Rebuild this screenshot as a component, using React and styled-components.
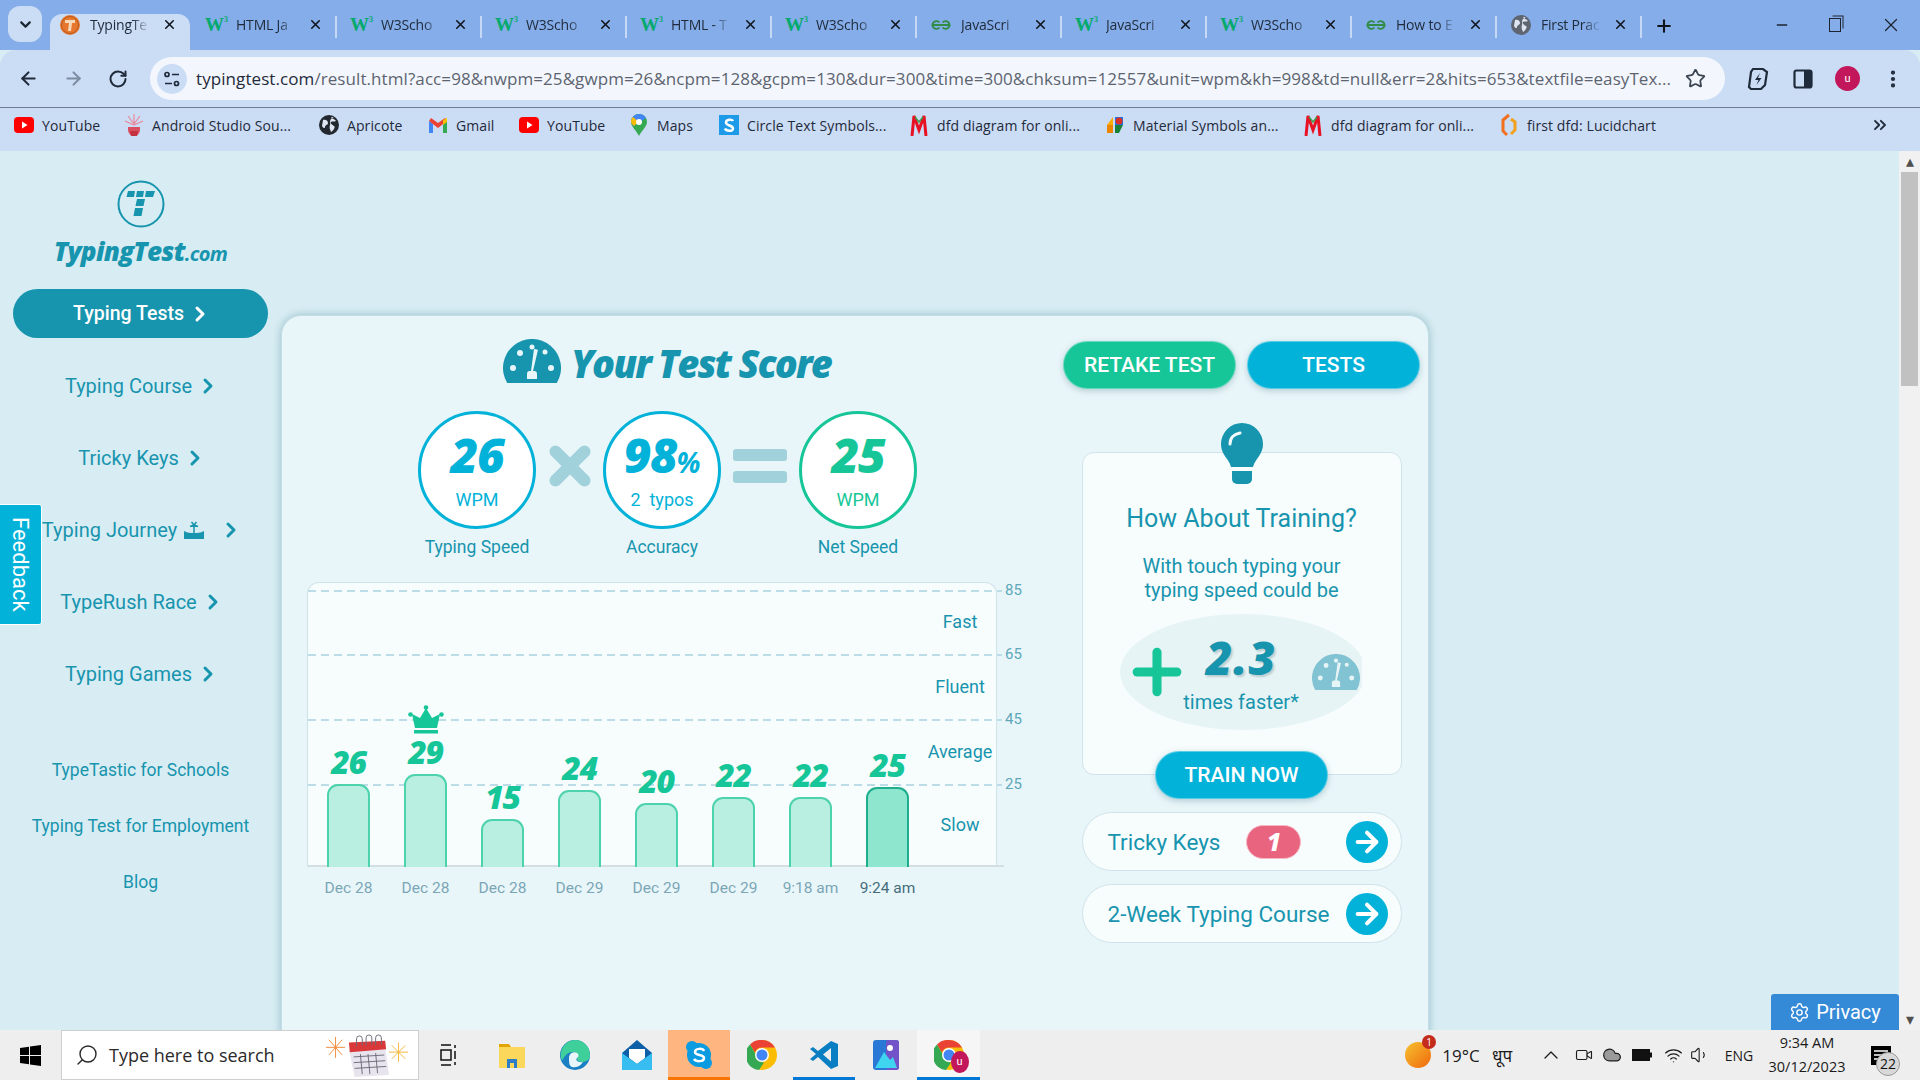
import React from "react"
import styled, { createGlobalStyle } from "styled-components"
import {
  ArrowLeft,
  ArrowRight,
  RotateCw,
  Star,
  X,
  Plus,
  Minus,
  ChevronDown,
  ChevronRight,
  ChevronUp,
  ChevronsRight,
  Settings,
  EllipsisVertical,
  Search,
  Cloud,
  Wifi,
  Volume1,
  Video
} from "lucide-react"

const TEAL = "#1794ae"
const CYAN = "#03b2d9"
const GREEN = "#17c698"

const GlobalStyle = createGlobalStyle`
  html, body { margin: 0; padding: 0; height: 100%; overflow: hidden; }
  body { font-family: Roboto, "Liberation Sans", sans-serif; }
  * { box-sizing: border-box; }
`

const Screen = styled.div`
  width: 1920px;
  height: 1080px;
  display: flex;
  flex-direction: column;
  overflow: hidden;
  background: #d8edf3;
`

/* browser chrome */
const TabStrip = styled.div`
  height: 50px;
  flex: none;
  background: #85ade9;
  display: flex;
  align-items: flex-end;
  padding-left: 8px;
`
const TabToggle = styled.div`
  width: 34px;
  height: 36px;
  margin: 0 8px 8px 0;
  border-radius: 12px;
  background: #cbdcf5;
  display: flex;
  align-items: center;
  justify-content: center;
  color: #1b2430;
`
const TabCell = styled.div`
  height: 36px;
  flex: none;
  display: flex;
  align-items: center;
  padding: ${p => (p.$active ? "0 0 15px 10px" : "0 0 15px 11px")};
  margin-right: ${p => (p.$active ? "5px" : "0")};
  width: ${p => (p.$active ? "140px" : "145px")};
  border-radius: 12px 12px 0 0;
  background: ${p => (p.$active ? "#cbdcf5" : "transparent")};
  position: relative;
  &::after {
    content: "";
    display: ${p => (p.$active ? "none" : "block")};
    position: absolute;
    right: 3px;
    top: 2px;
    width: 2px;
    height: 22px;
    background: #c5d8f4;
  }
`
const TabIcon = styled.span`
  width: 20px;
  height: 20px;
  flex: none;
  display: flex;
  align-items: center;
  justify-content: center;
`
const TabTitle = styled.span`
  width: 65px;
  margin-left: 10px;
  font: 14px "Open Sans", sans-serif;
  letter-spacing: -0.2px;
  color: #1f2a3a;
  white-space: nowrap;
  -webkit-mask-image: linear-gradient(90deg, #000 65%, transparent 92%);
  mask-image: linear-gradient(90deg, #000 65%, transparent 92%);
`
const TabClose = styled.span`
  margin-left: 7px;
  display: flex;
  color: #10151c;
`
const W3 = styled.span`
  font: 700 19px/20px "Liberation Serif", serif;
  color: #04aa6d;
  letter-spacing: -1px;
  sup {
    font-size: 8px;
    line-height: 0;
    color: #04aa6d;
    vertical-align: 9px;
    margin-left: 1px;
  }
`
const NewTab = styled.div`
  margin: 0 0 12px 9px;
  height: 24px;
  display: flex;
  align-items: center;
  color: #10151c;
`
const WindowButtons = styled.div`
  margin-left: auto;
  height: 50px;
  display: flex;
  align-items: center;
  color: #1b2430;
  padding-right: 18px;
  gap: 39px;
`
const RestoreGlyph = styled.span`
  width: 12px;
  height: 14px;
  border: 1.5px solid #1b2430;
  box-shadow: 2px -2px 0 -0.5px #85ade9, 3px -3px 0 -0.5px #1b2430;
`
const Toolbar = styled.div`
  height: 58px;
  flex: none;
  background: #cbdcf5;
  border-bottom: 1px solid #6f7d92;
  border-radius: 16px 16px 0 0;
  display: flex;
  align-items: center;
  padding: 0 0 0 18px;
  color: #1f2a3a;
`
const NavIcon = styled.span`
  width: 45px;
  display: flex;
  color: ${p => (p.$dim ? "#7d8ca0" : "#1f2a3a")};
`
const Omnibox = styled.div`
  position: relative;
  margin-left: -3px;
  width: 1575px;
  height: 43px;
  border-radius: 22px;
  background: #f3f7fd;
  display: flex;
  align-items: center;
  padding-left: 7px;
`
const SiteInfo = styled.span`
  width: 30px;
  height: 30px;
  flex: none;
  border-radius: 50%;
  background: #cbdcf5;
  display: flex;
  align-items: center;
  justify-content: center;
`
const Url = styled.span`
  margin-left: 9px;
  font: 17px "Open Sans", sans-serif;
  letter-spacing: 0.08px;
  color: #5d6470;
  white-space: nowrap;
  b {
    font-weight: 400;
    color: #1f2a3a;
  }
`
const UrlStar = styled.span`
  position: absolute;
  right: 19px;
  top: 11px;
  display: flex;
  color: #3a4350;
`
const ToolIcons = styled.div`
  flex: 1;
  display: flex;
  align-items: center;
  padding-left: 20px;
  gap: 20px;
`
const ToolSlot = styled.span`
  width: 25px;
  height: 25px;
  display: flex;
  align-items: center;
  justify-content: center;
`
const Avatar = styled.span`
  width: 25px;
  height: 25px;
  border-radius: 50%;
  background: #c2185b;
  color: #fff;
  font-size: 11px;
  display: flex;
  align-items: center;
  justify-content: center;
`
const BookmarkBar = styled.div`
  height: 43px;
  flex: none;
  background: #cbdcf5;
  display: flex;
  align-items: center;
  padding: 0 0 9px 14px;
  position: relative;
`
const Bookmark = styled.div`
  width: ${p => p.$w}px;
  flex: none;
  display: flex;
  align-items: center;
  gap: 8px;
  font: 14px "Open Sans", sans-serif;
  letter-spacing: 0.1px;
  color: #1f2a3a;
  white-space: nowrap;
`
const BookmarkIcon = styled.span`
  width: 20px;
  height: 20px;
  flex: none;
  display: flex;
  align-items: center;
  justify-content: center;
`
const More = styled.span`
  position: absolute;
  right: 30px;
  top: 7px;
  display: flex;
  color: #1f2a3a;
`

/* page */
const Viewport = styled.div`
  flex: 1;
  min-height: 0;
  display: flex;
`
const Page = styled.div`
  flex: 1;
  min-width: 0;
  position: relative;
  overflow: hidden;
  display: flex;
  align-items: flex-start;
`
const Scrollbar = styled.div`
  width: 21px;
  flex: none;
  background: #f1f1f1;
  display: flex;
  flex-direction: column;
  align-items: center;
  color: #505050;
`
const ScrollArrow = styled.span`
  height: 21px;
  flex: none;
  display: flex;
  align-items: center;
  justify-content: center;
`
const ScrollThumb = styled.div`
  width: 17px;
  height: 214px;
  flex: none;
  background: #c1c1c1;
  margin-bottom: auto;
`
const Sidebar = styled.nav`
  width: 281px;
  flex: none;
  display: flex;
  flex-direction: column;
  align-items: center;
  padding-top: 29px;
`
const Brand = styled.div`
  margin-top: 8px;
  height: 30px;
  font: italic 800 26px/30px "Open Sans", sans-serif;
  letter-spacing: -0.7px;
  color: ${TEAL};
  small {
    font-size: 20px;
    font-weight: 700;
  }
`
const SideList = styled.div`
  margin-top: 23px;
  margin-bottom: 60px;
  display: flex;
  flex-direction: column;
  gap: 23px;
  align-items: center;
`
const SideItem = styled.div`
  width: 255px;
  height: 49px;
  border-radius: 25px;
  display: flex;
  align-items: center;
  justify-content: center;
  gap: 4px;
  padding-left: 4px;
  font-size: ${p => (p.$active ? 19.5 : 20)}px;
  font-weight: ${p => (p.$active ? 500 : 400)};
  background: ${p => (p.$active ? TEAL : "transparent")};
  color: ${p => (p.$active ? "#fff" : TEAL)};
`
const SmallLinks = styled.div`
  display: flex;
  flex-direction: column;
  gap: 32px;
  align-items: center;
  font-size: 17.5px;
  line-height: 24px;
  color: ${TEAL};
`
const Feedback = styled.div`
  position: absolute;
  left: -2px;
  top: 353px;
  width: 44px;
  height: 121px;
  background: ${CYAN};
  border: 1px solid #fff;
  border-radius: 0 3px 3px 0;
  color: #fff;
  font-size: 22px;
  writing-mode: vertical-rl;
  display: flex;
  align-items: center;
  justify-content: center;
`
const Privacy = styled.div`
  position: absolute;
  right: 0;
  bottom: 0;
  width: 128px;
  height: 36px;
  background: #358ad8;
  border-radius: 3px 3px 0 0;
  color: #fff;
  font-size: 20px;
  display: flex;
  align-items: center;
  justify-content: center;
  gap: 6px;
`
const Card = styled.main`
  margin-top: 164px;
  width: 1148px;
  height: 760px;
  flex: none;
  background: #e9f6f9;
  border-radius: 20px 20px 0 0;
  border: 1px solid #c2dde6;
  box-shadow: 0 0 8px rgba(70, 130, 150, 0.45);
  padding: 23px 9px 0 25px;
  display: grid;
  grid-template-columns: 716px 357px;
  column-gap: 40px;
  align-content: start;
`
const LeftColumn = styled.section`
  display: flex;
  flex-direction: column;
`
const ScoreHeader = styled.div`
  height: 44px;
  display: flex;
  align-items: center;
  justify-content: center;
  gap: 10px;
  padding-left: 4px;
`
const ScoreTitle = styled.h1`
  margin: 4px 0 0;
  font: italic 800 38px/44px "Open Sans", sans-serif;
  letter-spacing: -1.8px;
  color: ${TEAL};
`
const ScoreRow = styled.div`
  margin-top: 28px;
  display: flex;
  justify-content: center;
  gap: 12px;
  padding-left: 5px;
`
const ScoreCol = styled.div`
  width: 118px;
  display: flex;
  flex-direction: column;
  align-items: center;
`
const Ring = styled.div`
  width: 118px;
  height: 118px;
  border-radius: 50%;
  background: #fff;
  border: 3px solid ${p => p.$color};
  color: ${p => p.$color};
  display: flex;
  flex-direction: column;
  align-items: center;
  justify-content: center;
`
const RingValue = styled.div`
  font: italic 800 48px/50px "Open Sans", sans-serif;
  letter-spacing: -1.4px;
  margin-top: 1px;
  small {
    font-size: 28px;
    line-height: 0;
    font-weight: 700;
    letter-spacing: 0;
  }
`
const RingNote = styled.div`
  font-size: 18px;
  line-height: 22px;
  margin-top: 9px;
  white-space: nowrap;
`
const ScoreLabel = styled.div`
  margin-top: 6px;
  font-size: 17.5px;
  line-height: 24px;
  color: ${TEAL};
  white-space: nowrap;
`
const Operator = styled.div`
  width: ${p => p.$w}px;
  height: 110px;
  flex: none;
  display: flex;
  flex-direction: column;
  align-items: center;
  justify-content: center;
  gap: 10px;
`
const EqualBar = styled.span`
  width: 54px;
  height: 12px;
  border-radius: 3px;
  background: #a1d1db;
`
const Chart = styled.div`
  margin-top: 23px;
  width: 690px;
  height: 285px;
  position: relative;
  background: #f7fdfd;
  border: 1px solid #cfe3ea;
  border-bottom: none;
  border-radius: 12px 12px 0 0;
`
const Baseline = styled.div`
  position: absolute;
  left: -1px;
  bottom: 0;
  width: 697px;
  height: 2px;
  background: #d3dfe2;
`
const GridLine = styled.div`
  position: absolute;
  left: 0;
  width: 694px;
  height: 1.5px;
  top: ${p => p.$top}px;
  background: repeating-linear-gradient(90deg, #bcdde8 0 8px, transparent 8px 13px);
`
const Tick = styled.span`
  position: absolute;
  left: 697px;
  top: ${p => p.$top - 9}px;
  font-size: 15px;
  line-height: 18px;
  color: #5da7ba;
`
const Band = styled.span`
  position: absolute;
  left: 612px;
  width: 80px;
  text-align: center;
  top: ${p => p.$top - 12}px;
  font-size: 18px;
  line-height: 24px;
  color: ${TEAL};
`
const Bars = styled.div`
  position: relative;
  height: 100%;
  display: flex;
  align-items: flex-end;
  gap: 34px;
  padding-left: 19px;
`
const BarCol = styled.div`
  width: 43px;
  flex: none;
  display: flex;
  flex-direction: column;
  align-items: center;
`
const CrownSlot = styled.span`
  display: flex;
  margin-bottom: 3px;
`
const BarValue = styled.div`
  font: italic 800 32px/30px "Open Sans", sans-serif;
  letter-spacing: -1.2px;
  color: ${GREEN};
  margin-bottom: 7px;
`
const Bar = styled.div`
  width: 43px;
  height: ${p => p.$h}px;
  background: ${p => (p.$latest ? "#8fe6cf" : "#b9efe0")};
  border: 2px solid ${p => (p.$latest ? "#1fae8d" : "#4dd2ae")};
  border-bottom: none;
  border-radius: 11px 11px 0 0;
`
const Dates = styled.div`
  margin-top: 11px;
  display: flex;
  gap: 34px;
  padding-left: 20px;
`
const DateCell = styled.div`
  width: 43px;
  flex: none;
  display: flex;
  justify-content: center;
  white-space: nowrap;
  font-size: 15.5px;
  line-height: 20px;
  color: ${p => (p.$latest ? "#466d7b" : "#7ba6b6")};
`
const RightColumn = styled.aside`
  display: flex;
  flex-direction: column;
  align-items: center;
`
const Buttons = styled.div`
  margin-top: 2px;
  display: flex;
  gap: 11px;
`
const PillButton = styled.div`
  width: ${p => p.$w || 173}px;
  height: 48px;
  border-radius: 24px;
  background: ${p => p.$color};
  border: 1px solid rgba(255, 255, 255, 0.35);
  box-shadow: 0 2px 6px rgba(60, 110, 130, 0.3);
  color: #fff;
  font-size: 21px;
  font-weight: 500;
  display: flex;
  align-items: center;
  justify-content: center;
`
const TrainingCard = styled.div`
  position: relative;
  margin-top: 63px;
  width: 320px;
  background: #f7fdfd;
  border: 1px solid #cfe3ea;
  border-radius: 12px;
  display: flex;
  flex-direction: column;
  align-items: center;
  padding-top: 51px;
  margin-bottom: 37px;
`
const BulbSlot = styled.span`
  position: absolute;
  top: -30px;
  left: 138px;
  display: flex;
`
const TrainingTitle = styled.h2`
  margin: 0;
  font-size: 25px;
  line-height: 30px;
  font-weight: 400;
  color: ${TEAL};
`
const TrainingText = styled.p`
  margin: 20px 0 0;
  font-size: 20px;
  line-height: 24px;
  text-align: center;
  color: ${TEAL};
`
const OvalClip = styled.div`
  margin-top: 12px;
  width: 242px;
  height: 116px;
  overflow: hidden;
  margin-left: -2px;
`
const Oval = styled.div`
  width: 246px;
  height: 116px;
  border-radius: 50%;
  background: #e7f4f6;
  display: flex;
  align-items: center;
  padding-left: 17px;
  gap: 7px;
`
const PlusMark = styled.span`
  width: 40px;
  flex: none;
  display: flex;
  align-items: center;
  justify-content: center;
  color: ${GREEN};
  svg {
    flex: none;
  }
`
const OvalMiddle = styled.div`
  width: 115px;
  flex: none;
  display: flex;
  flex-direction: column;
  align-items: center;
  color: ${TEAL};
`
const Times = styled.div`
  font: italic 800 46px/48px "Open Sans", sans-serif;
  letter-spacing: 1px;
  text-shadow: 2px 2px 2px rgba(60, 90, 100, 0.25);
  margin-top: 3px;
`
const Faster = styled.div`
  font-size: 20px;
  line-height: 24px;
  margin-top: 9px;
  white-space: nowrap;
`
const GaugeSlot = styled.span`
  margin-left: 6px;
  display: flex;
  flex: none;
`
const TrainNow = styled(PillButton)`
  margin-top: 21px;
  margin-bottom: -25px;
  position: relative;
`
const LinkPill = styled.div`
  width: 320px;
  height: 59px;
  border-radius: 30px;
  background: #f7fdfd;
  border: 1px solid #cfe3ea;
  display: flex;
  align-items: center;
  padding: 0 13px 0 25px;
  font-size: 22.5px;
  color: ${TEAL};
  white-space: nowrap;
  margin-bottom: 13px;
`
const Badge = styled.span`
  margin-left: 26px;
  width: 55px;
  height: 34px;
  border-radius: 17px;
  background: #e9647f;
  border: 1px solid #f6b9c6;
  color: #fff;
  font: italic 800 24px/32px "Open Sans", sans-serif;
  text-align: center;
`
const GoCircle = styled.span`
  margin-left: auto;
  width: 42px;
  height: 42px;
  border-radius: 50%;
  background: ${CYAN};
  color: #fff;
  display: flex;
  align-items: center;
  justify-content: center;
`

/* taskbar */
const Taskbar = styled.footer`
  height: 50px;
  flex: none;
  background: #eeeeee;
  display: flex;
  align-items: stretch;
  position: relative;
`
const StartSlot = styled.div`
  width: 61px;
  flex: none;
  display: flex;
  align-items: center;
  justify-content: center;
`
const SearchBox = styled.div`
  width: 358px;
  flex: none;
  background: #fff;
  border: 1px solid #cfcfcf;
  display: flex;
  align-items: center;
  padding-left: 13px;
  font: 18px "Open Sans", sans-serif;
  color: #2a2a2a;
  gap: 10px;
`
const SearchArt = styled.span`
  margin-left: auto;
  margin-right: 8px;
  display: flex;
`
const AppCell = styled.div`
  width: 62.3px;
  flex: none;
  display: flex;
  align-items: center;
  justify-content: center;
  background: ${p => p.$bg || "transparent"};
  border-bottom: 3px solid ${p => p.$line || "transparent"};
  padding-top: 3px;
`
const Tray = styled.div`
  margin-left: auto;
  display: flex;
  align-items: center;
  color: #1b1b1b;
`
const TraySlot = styled.span`
  width: ${p => p.$w}px;
  flex: none;
  display: flex;
  align-items: center;
  justify-content: center;
  font: ${p => p.$size || 17}px "Open Sans", "Noto Sans", sans-serif;
  white-space: nowrap;
  position: relative;
`
const Clock = styled.div`
  width: 90px;
  flex: none;
  text-align: center;
  font: 14.5px/24px "Open Sans", sans-serif;
  color: #1b1b1b;
`
const WeatherDot = styled.span`
  width: 26px;
  height: 26px;
  border-radius: 50%;
  background: linear-gradient(135deg, #f6c22e, #f0680e);
  position: relative;
`
const WeatherBadge = styled.span`
  position: absolute;
  top: -7px;
  right: -5px;
  width: 14px;
  height: 14px;
  border-radius: 50%;
  background: #c42b1c;
  color: #fff;
  font-size: 10px;
  line-height: 14px;
  text-align: center;
`
const NoteBadge = styled.span`
  position: absolute;
  left: 24px;
  top: 6px;
  width: 24px;
  height: 24px;
  border-radius: 50%;
  background: #d8d8d8;
  border: 1px solid #999;
  font: 14px/22px "Open Sans", sans-serif;
  text-align: center;
  color: #111;
`
const ProfileWrap = styled.span`
  position: relative;
  display: flex;
`
const ProfileDot = styled.span`
  position: absolute;
  right: -5px;
  bottom: -3px;
  width: 18px;
  height: 22px;
  border-radius: 50%;
  background: #c2185b;
  color: #fff;
  font-size: 11px;
  line-height: 22px;
  text-align: center;
`
const MirroredSearch = styled(Search)`
  transform: scaleX(-1);
`
const IslandSvg = styled.svg`
  margin: 0 10px 0 2px;
`

/* drawings */
const TLogo = () => (
  <svg width="48" height="48" viewBox="0 0 48 48">
    <circle cx="24" cy="24" r="22.5" fill="none" stroke={TEAL} strokeWidth="2" />
    <g fill={TEAL}>
      <path d="M11 11h7l-1 6h-7.500z" />
      <path d="M20 11h7l-1 6h-7z" />
      <path d="M29 11h9l-2 6h-8z" />
      <path d="M20 19h8l-1.500 7h-8z" />
      <path d="M18 28h8l-1.500 8h-8z" />
    </g>
  </svg>
)

const Gauge = ({ color, hole, width }) => (
  <svg width={width} viewBox="0 0 58 44">
    <path d="M4.200 44A29 29 0 1 1 53.800 44Z" fill={color} />
    <g fill={hole}>
      <circle cx="10" cy="29" r="3" />
      <circle cx="17" cy="14" r="3" />
      <circle cx="29" cy="8" r="2.500" />
      <circle cx="42" cy="13" r="2.500" />
      <circle cx="48" cy="29" r="3" />
      <path d="M31 10l4 .8-5 21.200h1.500c1.500 0 2.500 1 2.500 3v5h-10v-5c0-2 1-3 2.500-3h1.500z" />
    </g>
  </svg>
)

const Crown = () => (
  <svg width="36" height="29" viewBox="0 0 36 29">
    <g fill={GREEN}>
      <circle cx="18" cy="2.500" r="2.300" />
      <circle cx="2.500" cy="9.500" r="2.300" />
      <circle cx="33.500" cy="9.500" r="2.300" />
      <path d="M18 3l6 10 8-4-3 14H7L4 9l8 4z" />
      <rect x="6" y="25" width="24" height="3.500" />
    </g>
  </svg>
)

const Bulb = () => (
  <svg width="42" height="61" viewBox="0 0 42 61">
    <path
      d="M21 0a21 21 0 0 1 21 21c0 6-2.500 10-6 15-2.500 3.500-3.500 6-4 8H10c-.5-2-1.500-4.500-4-8-3.500-5-6-9-6-15A21 21 0 0 1 21 0z"
      fill={TEAL}
    />
    <path d="M11 48h20v8a5 5 0 0 1-5 5H16a5 5 0 0 1-5-5z" fill={TEAL} />
    <path d="M9 21c0-6 4-10 10-11" stroke="#f1fbfb" strokeWidth="3" strokeLinecap="round" fill="none" />
  </svg>
)

const Island = () => (
  <IslandSvg width="22" height="20" viewBox="0 0 22 20">
    <path d="M1 11c4 2 6 2 10 2s6 0 10-2v8H1z" fill={TEAL} />
    <path d="M11 13V5M11 5L7 6.500M11 5l4 1.500M11 5L8.500 2M11 5l2.500-3" stroke={TEAL} strokeWidth="1.500" fill="none" />
  </IslandSvg>
)

const TypingFavicon = () => (
  <svg width="20" height="20" viewBox="0 0 20 20">
    <circle cx="10" cy="10" r="10" fill="#e8772e" />
    <circle cx="10" cy="10" r="8.500" fill="none" stroke="#b85a1c" />
    <path d="M5 5h10v3h-3l-1 8H8l1-8H5z" fill="#f7d9b8" />
  </svg>
)
const GfgIcon = () => (
  <svg width="20" height="12" viewBox="0 0 20 12">
    <g fill="none" stroke="#2f8d46" strokeWidth="1.800">
      <path d="M10 6H1.500a4 4 0 0 1 7-2.500" />
      <path d="M10 6h8.500a4 4 0 0 0-7-2.500" />
      <path d="M1.500 6a4 4 0 0 0 7 2.500" />
      <path d="M18.500 6a4 4 0 0 1-7 2.500" />
    </g>
  </svg>
)
const GlobeIcon = ({ size = 20, dark = "#5f6672" }) => (
  <svg width={size} height={size} viewBox="0 0 20 20">
    <circle cx="10" cy="10" r="10" fill={dark} />
    <path d="M4 5c3-1 5 1 5 3s-3 2-3 4-2 1-3-1M12 2c1 2 4 2 5 4-2 1-4 0-5 1s1 3 3 4-1 5-3 6c-1-3-2-4-1-7s-2-5 4-8z" fill="#dfe6f2" />
  </svg>
)
const YoutubeIcon = () => (
  <svg width="20" height="20" viewBox="0 0 20 20">
    <rect y="2" width="20" height="16" rx="4" fill="#f00" />
    <path d="M8 6.500l5.500 3.500L8 13.500z" fill="#fff" />
  </svg>
)
const AndroidIcon = () => (
  <svg width="20" height="24" viewBox="0 0 20 24">
    <g stroke="#e9889a" strokeWidth="1.200">
      <path d="M10 1v10M4 3l6 8M16 3l-6 8M1 8l9 4M19 8l-9 4" />
    </g>
    <path d="M4 14h12v3a6 6 0 0 1-12 0z" fill="#d94f62" />
    <path d="M6 18h8l-1 5H7z" fill="#c4323f" />
  </svg>
)
const GmailIcon = () => (
  <svg width="20" height="16" viewBox="0 0 20 16">
    <path d="M1 4v12h4V7z" fill="#4285f4" />
    <path d="M19 4v12h-4V7z" fill="#34a853" />
    <path d="M1 4l9 7 9-7-2-3-7 5-7-5z" fill="#ea4335" />
    <path d="M15 3l4-2v4l-4 3z" fill="#fbbc04" />
  </svg>
)
const MapsIcon = () => (
  <svg width="16" height="22" viewBox="0 0 16 22">
    <path d="M8 0a8 8 0 0 1 8 8c0 5-6 9-8 14-2-5-8-9-8-14a8 8 0 0 1 8-8z" fill="#34a853" />
    <path d="M8 0a8 8 0 0 1 7 4L3 12C1 10 0 9 0 8a8 8 0 0 1 8-8z" fill="#4285f4" />
    <path d="M2 3L8 8l-5 4C1 10 0 9 0 8c0-2 .7-3.700 2-5z" fill="#fbbc04" />
    <circle cx="8" cy="8" r="3" fill="#fff" />
  </svg>
)
const CircleTextIcon = () => (
  <svg width="20" height="20" viewBox="0 0 20 20">
    <rect width="20" height="20" fill="#1e9be8" />
    <path d="M14 6c-1-2-7-2-7 1.500S14 10 14 13.500 7 16 6 13.500" stroke="#fff" strokeWidth="2.500" fill="none" />
  </svg>
)
const DfdIcon = () => (
  <svg width="18" height="22" viewBox="0 0 18 22">
    <path d="M2 22L4 2l5 14 5-14 2 20" stroke="#e81123" strokeWidth="3" fill="none" />
    <path d="M5 3l4 5 4-5" stroke="#3c9d4e" strokeWidth="1.500" fill="none" />
  </svg>
)
const MaterialIcon = () => (
  <svg width="20" height="20" viewBox="0 0 20 20">
    <path d="M2 10L8 2v8z" fill="#f9ab00" />
    <path d="M2 10h6v8H2z" fill="#ea8600" />
    <path d="M10 2h8v8h-8z" fill="#1a73e8" />
    <path d="M10 10h8l-4 8h-4z" fill="#188038" />
    <circle cx="14" cy="6" r="3.500" fill="#d93025" />
  </svg>
)
const LucidIcon = () => (
  <svg width="18" height="24" viewBox="0 0 18 24">
    <path d="M9 2L3 7v11l4 4" stroke="#f2701d" strokeWidth="3" fill="none" />
    <path d="M11 6l4 3v8l-4 4" stroke="#f2a01d" strokeWidth="3" fill="none" />
  </svg>
)
const Lightning = () => (
  <svg width="22" height="24" viewBox="0 0 22 24">
    <path d="M6 2h10l4 3-2 13-4 4H4L2 20 4 5z" fill="none" stroke="#1f2a3a" strokeWidth="2.200" />
    <path d="M13 6l-5 7h3.500l-2 5 5-7h-3.500z" fill="#1f2a3a" />
  </svg>
)
const SidePanel = () => (
  <svg width="20" height="20" viewBox="0 0 20 20">
    <rect x="1.500" y="1.500" width="17" height="17" rx="2" fill="none" stroke="#1f2a3a" strokeWidth="2.200" />
    <rect x="11" y="2" width="7" height="16" fill="#1f2a3a" />
  </svg>
)
const Tune = () => (
  <svg width="18" height="18" viewBox="0 0 18 18" fill="none" stroke="#1f2a3a" strokeWidth="1.700">
    <circle cx="4" cy="4.500" r="2" />
    <path d="M9 4.500h7M2 13.500h7" />
    <circle cx="13.500" cy="13.500" r="2" />
  </svg>
)
const WindowsLogo = () => (
  <svg width="21" height="21" viewBox="0 0 21 21" fill="#000">
    <path d="M0 3l9-1.300V10H0zM10 1.500L21 0v10H10zM0 11h9v8.300L0 18zM10 11h11v10l-11-1.500z" />
  </svg>
)
const CalendarArt = () => (
  <svg width="84" height="44" viewBox="0 0 88 46">
    <g stroke="#f08a3c" strokeWidth="1">
      <path d="M10 4v22M0 15h20M3 7l14 16M17 7L3 23" />
    </g>
    <g stroke="#f5b63c" strokeWidth="1">
      <path d="M76 10v20M66 20h20M69 13l14 14M83 13L69 27" />
    </g>
    <path d="M24 17l38-2 4 29-36 2z" fill="#e8e4ee" />
    <path d="M24 10l38-2 1 9-38 3z" fill="#d8383a" />
    <g stroke="#6b6b7a" strokeWidth="1" fill="none">
      <path d="M32 14V6a3 3 0 0 1 6 0v7M42 13V5a3 3 0 0 1 6 0v7M52 13V5a3 3 0 0 1 6 0v7" />
      <path d="M29 25l32-2M29 31l33-2M30 37l33-2M36 22l2 21M44 22l2 21M52 21l2 21" />
    </g>
  </svg>
)
const TaskView = () => (
  <svg width="20" height="22" viewBox="0 0 20 22" fill="none" stroke="#111" strokeWidth="1.500">
    <path d="M1 1h10M1 21h10" />
    <rect x="1" y="6" width="10" height="10" />
    <path d="M15 1v3M15 7v8M15 18v3" />
  </svg>
)
const FolderIcon = () => (
  <svg width="26" height="26" viewBox="0 0 26 26">
    <path d="M0 2h10l2 3H0z" fill="#e2a400" />
    <path d="M0 5h26v21H0z" fill="#fbd75b" />
    <path d="M8 26v-9h10v9h-3v-5h-4v5z" fill="#2e7dc9" />
  </svg>
)
const EdgeIcon = () => (
  <svg width="30" height="30" viewBox="0 0 30 30">
    <circle cx="15" cy="15" r="15" fill="#1b7fc4" />
    <path d="M15 0a15 15 0 0 1 15 15c0 5-4 7-8 7-5 0-6-3-4-5 1-5-7-7-12-2-2 2-3 4-4 6A15 15 0 0 1 15 0z" fill="#3ecf9a" />
    <path d="M9 18c0-5 5-7 8-5 2 1 2 4 0 5-2 2 1 5 6 4-3 5-9 6-11 5-3-1-3-5-3-9z" fill="#e9f6f9" />
  </svg>
)
const MailIcon = () => (
  <svg width="30" height="30" viewBox="0 0 30 30">
    <path d="M15 0l15 13v17H0V13z" fill="#0d5fa8" />
    <path d="M7 9h16v9l-8 6-8-6z" fill="#fff" />
    <path d="M0 13l15 11 15-11v17H0z" fill="#38bdf0" />
  </svg>
)
const SkypeIcon = () => (
  <svg width="26" height="28" viewBox="0 0 26 28">
    <circle cx="13" cy="14" r="12" fill="#0a9be0" />
    <circle cx="6" cy="6" r="6" fill="#0a9be0" />
    <circle cx="20" cy="22" r="6" fill="#0a9be0" />
    <path d="M18 10c-1-3-9-3-9 1s9 2 9 6-8 4-10 1" stroke="#fff" strokeWidth="2.500" fill="none" />
  </svg>
)
const ChromeIcon = ({ size = 30 }) => (
  <svg width={size} height={size} viewBox="0 0 30 30">
    <circle cx="15" cy="15" r="15" fill="#fbbc04" />
    <path d="M15 0a15 15 0 0 1 13 7.500H15a7.500 7.500 0 0 0-7 5L3 4.500A15 15 0 0 1 15 0z" fill="#ea4335" />
    <path d="M3 4.500l7 12a7.500 7.500 0 0 0 7 6L12 30A15 15 0 0 1 3 4.500z" fill="#34a853" />
    <circle cx="15" cy="15" r="7" fill="#fff" />
    <circle cx="15" cy="15" r="5.500" fill="#4285f4" />
  </svg>
)
const VsCodeIcon = () => (
  <svg width="30" height="30" viewBox="0 0 30 30">
    <path d="M22 1l7 3v22l-7 3-13-12-5 4-3-2 6-5-6-5 3-2 5 4z" fill="#0a7ec2" />
    <path d="M22 8l-8 6.500 8 7z" fill="#eeeeee" />
  </svg>
)
const PhotosIcon = () => (
  <svg width="26" height="30" viewBox="0 0 26 30">
    <rect width="26" height="30" rx="3" fill="#2a78d6" />
    <rect x="13" width="13" height="30" rx="3" fill="#7354c8" />
    <path d="M2 28l9-16 6 8 3-3 4 11z" fill="#3fd4f0" />
    <circle cx="17" cy="8" r="3" fill="#fff" />
  </svg>
)
const Battery = () => (
  <svg width="20" height="12" viewBox="0 0 20 12">
    <rect x=".5" y=".5" width="17" height="11" fill="#111" stroke="#111" />
    <rect x="18" y="3.500" width="2" height="5" fill="#111" />
  </svg>
)
const NoteIcon = () => (
  <svg width="20" height="19" viewBox="0 0 20 19">
    <rect width="20" height="19" fill="#000" />
    <path d="M3 5h14M3 9h14M3 13h14" stroke="#fff" strokeWidth="1.500" />
  </svg>
)

const tabs = [
  { icon: "w3", title: "HTML Ja" },
  { icon: "w3", title: "W3Scho" },
  { icon: "w3", title: "W3Scho" },
  { icon: "w3", title: "HTML - T" },
  { icon: "w3", title: "W3Scho" },
  { icon: "gfg", title: "JavaScri" },
  { icon: "w3", title: "JavaScri" },
  { icon: "w3", title: "W3Scho" },
  { icon: "gfg", title: "How to E" },
  { icon: "globe", title: "First Prac" }
]

const bookmarks = [
  { icon: <YoutubeIcon />, text: "YouTube", w: 110 },
  { icon: <AndroidIcon />, text: "Android Studio Sou...", w: 195 },
  { icon: <GlobeIcon dark="#23282f" />, text: "Apricote", w: 109 },
  { icon: <GmailIcon />, text: "Gmail", w: 91 },
  { icon: <YoutubeIcon />, text: "YouTube", w: 110 },
  { icon: <MapsIcon />, text: "Maps", w: 90 },
  { icon: <CircleTextIcon />, text: "Circle Text Symbols...", w: 190 },
  { icon: <DfdIcon />, text: "dfd diagram for onli...", w: 196 },
  { icon: <MaterialIcon />, text: "Material Symbols an...", w: 198 },
  { icon: <DfdIcon />, text: "dfd diagram for onli...", w: 196 },
  { icon: <LucidIcon />, text: "first dfd: Lucidchart", w: 180 }
]

const history = [
  { wpm: 26, date: "Dec 28" },
  { wpm: 29, date: "Dec 28", best: true },
  { wpm: 15, date: "Dec 28" },
  { wpm: 24, date: "Dec 29" },
  { wpm: 20, date: "Dec 29" },
  { wpm: 22, date: "Dec 29" },
  { wpm: 22, date: "9:18 am" },
  { wpm: 25, date: "9:24 am", latest: true }
]

const gridLines = [
  { top: 7, label: "85" },
  { top: 71, label: "65" },
  { top: 136, label: "45" },
  { top: 201, label: "25" }
]

const bands = [
  { top: 39, label: "Fast" },
  { top: 104, label: "Fluent" },
  { top: 169, label: "Average" },
  { top: 242, label: "Slow" }
]

const tabIcon = icon => {
  if (icon === "gfg") return <GfgIcon />
  if (icon === "globe") return <GlobeIcon />
  return (
    <W3>
      W<sup>3</sup>
    </W3>
  )
}

const Chrome = () => (
  <>
    <TabStrip>
      <TabToggle>
        <ChevronDown size={17} strokeWidth={3} />
      </TabToggle>
      <TabCell $active>
        <TabIcon>
          <TypingFavicon />
        </TabIcon>
        <TabTitle>TypingTe</TabTitle>
        <TabClose>
          <X size={15} strokeWidth={2.5} />
        </TabClose>
      </TabCell>
      {tabs.map((tab, i) => (
        <TabCell key={i}>
          <TabIcon>{tabIcon(tab.icon)}</TabIcon>
          <TabTitle>{tab.title}</TabTitle>
          <TabClose>
            <X size={15} strokeWidth={2.5} />
          </TabClose>
        </TabCell>
      ))}
      <NewTab>
        <Plus size={20} strokeWidth={2.5} />
      </NewTab>
      <WindowButtons>
        <Minus size={16} />
        <RestoreGlyph />
        <X size={22} strokeWidth={1.3} />
      </WindowButtons>
    </TabStrip>
    <Toolbar>
      <NavIcon>
        <ArrowLeft size={21} strokeWidth={2.4} />
      </NavIcon>
      <NavIcon $dim>
        <ArrowRight size={21} strokeWidth={2.4} />
      </NavIcon>
      <NavIcon>
        <RotateCw size={20} strokeWidth={2.4} />
      </NavIcon>
      <Omnibox>
        <SiteInfo>
          <Tune />
        </SiteInfo>
        <Url>
          <b>typingtest.com</b>
          /result.html?acc=98&amp;nwpm=25&amp;gwpm=26&amp;ncpm=128&amp;gcpm=130&amp;dur=300&amp;time=300&amp;chksum=12557&amp;unit=wpm&amp;kh=998&amp;td=null&amp;err=2&amp;hits=653&amp;textfile=easyTex...
        </Url>
        <UrlStar>
          <Star size={21} strokeWidth={2} />
        </UrlStar>
      </Omnibox>
      <ToolIcons>
        <ToolSlot>
          <Lightning />
        </ToolSlot>
        <ToolSlot>
          <SidePanel />
        </ToolSlot>
        <ToolSlot>
          <Avatar>u</Avatar>
        </ToolSlot>
        <ToolSlot>
          <EllipsisVertical size={22} strokeWidth={2.6} />
        </ToolSlot>
      </ToolIcons>
    </Toolbar>
    <BookmarkBar>
      {bookmarks.map((b, i) => (
        <Bookmark key={i} $w={b.w}>
          <BookmarkIcon>{b.icon}</BookmarkIcon>
          {b.text}
        </Bookmark>
      ))}
      <More>
        <ChevronsRight size={20} strokeWidth={2.2} />
      </More>
    </BookmarkBar>
  </>
)

const NavRow = ({ children, active }) => (
  <SideItem $active={active}>
    {children}
    <ChevronRight size={24} strokeWidth={3} />
  </SideItem>
)

const SideNav = () => (
  <Sidebar>
    <TLogo />
    <Brand>
      TypingTest<small>.com</small>
    </Brand>
    <SideList>
      <NavRow active>Typing Tests</NavRow>
      <NavRow>Typing Course</NavRow>
      <NavRow>Tricky Keys</NavRow>
      <NavRow>
        Typing Journey <Island />
      </NavRow>
      <NavRow>TypeRush Race</NavRow>
      <NavRow>Typing Games</NavRow>
    </SideList>
    <SmallLinks>
      <span>TypeTastic for Schools</span>
      <span>Typing Test for Employment</span>
      <span>Blog</span>
    </SmallLinks>
  </Sidebar>
)

const ScoreCircles = () => (
  <ScoreRow>
    <ScoreCol>
      <Ring $color={CYAN}>
        <RingValue>26</RingValue>
        <RingNote>WPM</RingNote>
      </Ring>
      <ScoreLabel>Typing Speed</ScoreLabel>
    </ScoreCol>
    <Operator $w={43}>
      <X size={58} strokeWidth={5} color="#a1d1db" />
    </Operator>
    <ScoreCol>
      <Ring $color={CYAN}>
        <RingValue>
          98<small>%</small>
        </RingValue>
        <RingNote>2&nbsp; typos</RingNote>
      </Ring>
      <ScoreLabel>Accuracy</ScoreLabel>
    </ScoreCol>
    <Operator $w={54}>
      <EqualBar />
      <EqualBar />
    </Operator>
    <ScoreCol>
      <Ring $color={GREEN}>
        <RingValue>25</RingValue>
        <RingNote>WPM</RingNote>
      </Ring>
      <ScoreLabel>Net Speed</ScoreLabel>
    </ScoreCol>
  </ScoreRow>
)

const HistoryChart = () => (
  <>
    <Chart>
      {gridLines.map(line => (
        <React.Fragment key={line.label}>
          <GridLine $top={line.top} />
          <Tick $top={line.top}>{line.label}</Tick>
        </React.Fragment>
      ))}
      {bands.map(band => (
        <Band key={band.label} $top={band.top}>
          {band.label}
        </Band>
      ))}
      <Baseline />
      <Bars>
        {history.map((item, i) => (
          <BarCol key={i}>
            {item.best && (
              <CrownSlot>
                <Crown />
              </CrownSlot>
            )}
            <BarValue>{item.wpm}</BarValue>
            <Bar $h={Math.round(item.wpm * 3.2)} $latest={item.latest} />
          </BarCol>
        ))}
      </Bars>
    </Chart>
    <Dates>
      {history.map((item, i) => (
        <DateCell key={i} $latest={item.latest}>
          {item.date}
        </DateCell>
      ))}
    </Dates>
  </>
)

const Training = () => (
  <RightColumn>
    <Buttons>
      <PillButton $color={GREEN}>RETAKE TEST</PillButton>
      <PillButton $color={CYAN}>TESTS</PillButton>
    </Buttons>
    <TrainingCard>
      <BulbSlot>
        <Bulb />
      </BulbSlot>
      <TrainingTitle>How About Training?</TrainingTitle>
      <TrainingText>
        With touch typing your
        <br />
        typing speed could be
      </TrainingText>
      <OvalClip>
        <Oval>
          <PlusMark>
            <Plus size={68} strokeWidth={3.2} />
          </PlusMark>
          <OvalMiddle>
            <Times>2.3</Times>
            <Faster>times faster*</Faster>
          </OvalMiddle>
          <GaugeSlot>
            <Gauge color="#81c3d2" hole="#e7f4f6" width={48} />
          </GaugeSlot>
        </Oval>
      </OvalClip>
      <TrainNow $color={CYAN}>TRAIN NOW</TrainNow>
    </TrainingCard>
    <LinkPill>
      Tricky Keys
      <Badge>1</Badge>
      <GoCircle>
        <ArrowRight size={32} strokeWidth={3} />
      </GoCircle>
    </LinkPill>
    <LinkPill>
      2-Week Typing Course
      <GoCircle>
        <ArrowRight size={32} strokeWidth={3} />
      </GoCircle>
    </LinkPill>
  </RightColumn>
)

const WindowsBar = () => (
  <Taskbar>
    <StartSlot>
      <WindowsLogo />
    </StartSlot>
    <SearchBox>
      <MirroredSearch size={24} strokeWidth={1.4} />
      Type here to search
      <SearchArt>
        <CalendarArt />
      </SearchArt>
    </SearchBox>
    <AppCell>
      <TaskView />
    </AppCell>
    <AppCell>
      <FolderIcon />
    </AppCell>
    <AppCell>
      <EdgeIcon />
    </AppCell>
    <AppCell>
      <MailIcon />
    </AppCell>
    <AppCell $bg="#ffb580" $line="#f97500">
      <SkypeIcon />
    </AppCell>
    <AppCell>
      <ChromeIcon />
    </AppCell>
    <AppCell $line="#0078d4">
      <VsCodeIcon />
    </AppCell>
    <AppCell>
      <PhotosIcon />
    </AppCell>
    <AppCell $bg="#f6f6f6" $line="#0078d4">
      <ProfileWrap>
        <ChromeIcon />
        <ProfileDot>u</ProfileDot>
      </ProfileWrap>
    </AppCell>
    <Tray>
      <TraySlot $w={36}>
        <WeatherDot>
          <WeatherBadge>1</WeatherBadge>
        </WeatherDot>
      </TraySlot>
      <TraySlot $w={50}>19°C</TraySlot>
      <TraySlot $w={32} $size={17}>
        धूप
      </TraySlot>
      <TraySlot $w={18} />
      <TraySlot $w={30}>
        <ChevronUp size={24} strokeWidth={1.3} />
      </TraySlot>
      <TraySlot $w={36}>
        <Video size={18} strokeWidth={1.5} />
      </TraySlot>
      <TraySlot $w={20}>
        <Cloud size={20} strokeWidth={1.5} fill="#9a9a9a" />
      </TraySlot>
      <TraySlot $w={40}>
        <Battery />
      </TraySlot>
      <TraySlot $w={22}>
        <Wifi size={19} strokeWidth={1.5} />
      </TraySlot>
      <TraySlot $w={32}>
        <Volume1 size={20} strokeWidth={1.3} />
      </TraySlot>
      <TraySlot $w={46} $size={14}>
        ENG
      </TraySlot>
      <Clock>
        9:34 AM
        <br />
        30/12/2023
      </Clock>
      <TraySlot $w={58}>
        <NoteIcon />
        <NoteBadge>22</NoteBadge>
      </TraySlot>
      <TraySlot $w={10} />
    </Tray>
  </Taskbar>
)

const App = () => (
  <Screen>
    <GlobalStyle />
    <Chrome />
    <Viewport>
      <Page>
        <SideNav />
        <Card>
          <LeftColumn>
            <ScoreHeader>
              <Gauge color={TEAL} hole="#e9f6f9" width={58} />
              <ScoreTitle>Your Test Score</ScoreTitle>
            </ScoreHeader>
            <ScoreCircles />
            <HistoryChart />
          </LeftColumn>
          <Training />
        </Card>
        <Feedback>Feedback</Feedback>
        <Privacy>
          <Settings size={21} strokeWidth={1.6} />
          Privacy
        </Privacy>
      </Page>
      <Scrollbar>
        <ScrollArrow>▴</ScrollArrow>
        <ScrollThumb />
        <ScrollArrow>▾</ScrollArrow>
      </Scrollbar>
    </Viewport>
    <WindowsBar />
  </Screen>
)

export default App
